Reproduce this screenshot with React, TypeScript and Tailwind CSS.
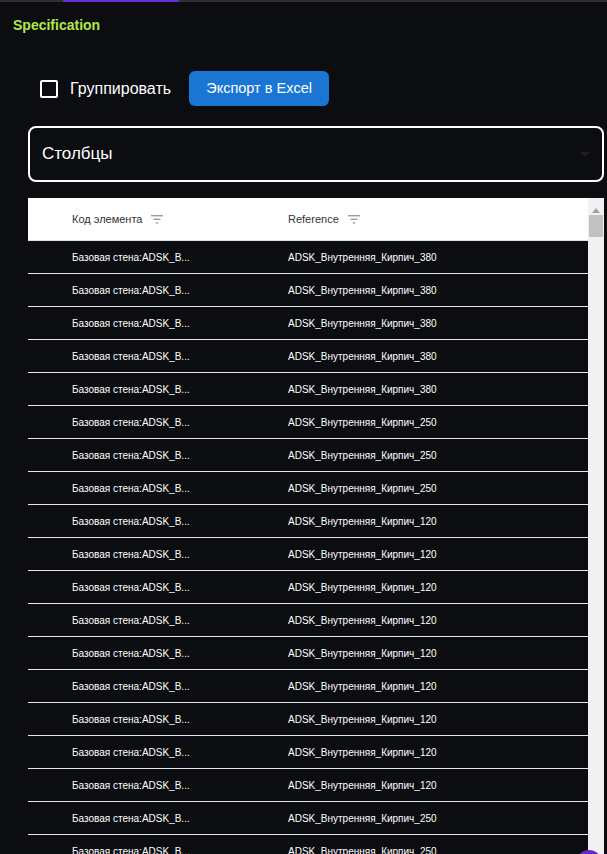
import React from "react";

const rows: string[] = [
  "380", "380", "380", "380", "380",
  "250", "250", "250",
  "120", "120", "120", "120", "120", "120", "120", "120", "120",
  "250", "250", "250",
];

function FilterIcon() {
  return (
    <svg width="12" height="9" viewBox="0 0 12 9" className="shrink-0">
      <rect x="0" y="0" width="12" height="1.4" fill="#9e9e9e" />
      <rect x="2.5" y="3.6" width="7" height="1.4" fill="#9e9e9e" />
      <rect x="4.8" y="7.2" width="2.4" height="1.4" fill="#9e9e9e" />
    </svg>
  );
}

export default function App() {
  return (
    <div
      className="relative h-[854px] w-[607px] overflow-hidden bg-[#0c0d10] text-white"
      style={{ fontFamily: '"Liberation Sans", Arial, sans-serif' }}
    >
      {/* top tab indicator */}
      <div className="h-[2px] w-full bg-[#2e2e33]">
        <div className="ml-[63px] h-[2px] w-[116px] bg-[#6a2bd8]" />
      </div>

      <div className="pl-[13px] pt-[15px] text-[14px] font-bold leading-[17px] text-[#b2e64b]">
        Specification
      </div>

      <div className="pl-[28px] pr-[3px]">
        {/* controls */}
        <div className="mt-[37px] flex items-center pl-[12px]">
          <div className="h-[18px] w-[18px] rounded-[2px] border-2 border-white" />
          <span className="ml-[12px] text-[16px] leading-[20px]">Группировать</span>
          <button className="ml-[18px] h-[35px] w-[140px] rounded-[6px] bg-[#1976d2] text-[14.5px] text-white">
            Экспорт в Excel
          </button>
        </div>

        {/* select */}
        <div className="mt-[20px] flex h-[56px] items-center justify-between rounded-[8px] border-2 border-white pl-[12px] pr-[12px]">
          <span className="text-[17px]">Столбцы</span>
          <svg width="10" height="5" viewBox="0 0 10 5">
            <path d="M0 0 L10 0 L5 5 Z" fill="#1e1f22" />
          </svg>
        </div>

        {/* table */}
        <div className="mt-[16px] flex">
          <div className="flex-1">
            <div className="flex h-[43px] items-center border-b border-[#e0e0e0] bg-white text-[11px] text-[#333]">
              <div className="flex w-[260px] items-center gap-[9px] pl-[44px]">
                <span>Код элемента</span>
                <FilterIcon />
              </div>
              <div className="flex items-center gap-[9px]">
                <span>Reference</span>
                <FilterIcon />
              </div>
            </div>
            {rows.map((r, i) => (
              <div
                key={i}
                className="flex h-[33px] items-center border-b border-[#e6e6e6] text-[10px]"
              >
                <div className="w-[260px] pl-[44px]">Базовая стена:ADSK_B...</div>
                <div>ADSK_Внутренняя_Кирпич_{r}</div>
              </div>
            ))}
          </div>
          {/* scrollbar */}
          <div className="flex w-[16px] flex-col items-center bg-[#f1f1f1]">
            <svg width="8" height="5" viewBox="0 0 8 5" className="mt-[10px]">
              <path d="M0 5 L8 5 L4 0 Z" fill="#a3a3a3" />
            </svg>
            <div className="mt-[2px] h-[22px] w-[14px] bg-[#c1c1c1]" />
          </div>
        </div>
      </div>

      <div className="absolute left-[576px] top-[850px] h-[30px] w-[26px] rounded-full bg-[#6a22d8]" />
    </div>
  );
}
